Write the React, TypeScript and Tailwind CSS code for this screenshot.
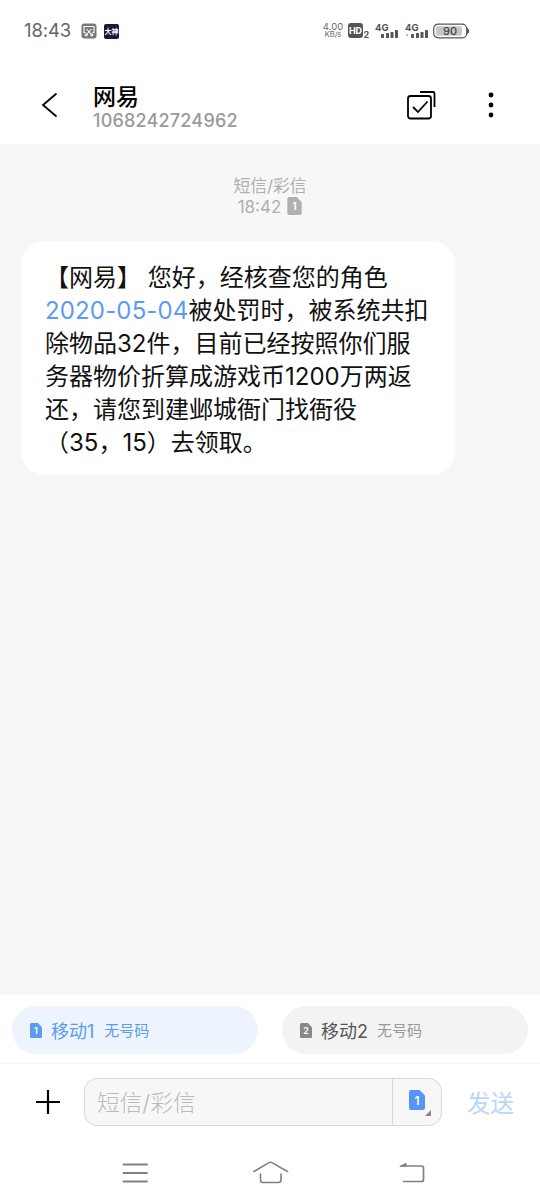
interface SimIconProps {
  slot: string;
  className: string;
}

// SIM card with a cut corner and the slot number
function SimIcon({ slot, className }: SimIconProps) {
  return (
    <svg viewBox="0 0 16 20" className={className}>
      <path d="M2 0H10.5L16 5.5V18a2 2 0 0 1-2 2H2a2 2 0 0 1-2-2V2a2 2 0 0 1 2-2Z" fill="currentColor" />
      <text x="8" y="14.5" textAnchor="middle" fontSize="12" fontWeight="600" fill="#fff">
        {slot}
      </text>
    </svg>
  );
}

function Signal({ first }: { first: string }) {
  return (
    <svg viewBox="0 0 25 18" className="h-[18px] w-[25px]">
      <text x="0" y="9" fontSize="9.5" fontWeight="700" fill="#555">
        4G
      </text>
      <rect x="1" y="12" width="2" height="2" fill={first} />
      <rect x="6" y="12" width="3" height="4" rx="0.5" fill="#555" />
      <rect x="11" y="11" width="3" height="5" rx="0.5" fill="#555" />
      <rect x="15.5" y="10" width="3" height="6" rx="0.5" fill="#555" />
      <rect x="20" y="8" width="3" height="8" rx="0.5" fill="#555" />
    </svg>
  );
}

function StatusBar() {
  return (
    <div className="flex h-[62px] items-center pl-6 text-[#666]">
      <span className="w-[57px] text-[18.5px] tracking-[-0.1px]">18:43</span>
      <svg viewBox="0 0 16 16" className="h-4 w-4">
        <rect x="0.5" y="0.5" width="15" height="15" rx="3" fill="#777" />
        <g fill="none" stroke="#fff" strokeWidth="1.1">
          <path d="M4.5 9.5H3V3.5H13V9.5H11.5M5.5 6L10 11M10.5 6L6 11" />
          <circle cx="5.2" cy="11.8" r="1.1" />
          <circle cx="10.8" cy="11.8" r="1.1" />
        </g>
      </svg>
      <span className="ml-[7px] flex h-[15px] w-[15px] items-center justify-center overflow-hidden rounded-xs bg-[#171a38] text-[7px] leading-none font-bold whitespace-nowrap text-white">
        大神
      </span>
      <div className="ml-[203px] w-[22px] text-center leading-[8px]">
        <div className="text-[9.5px]">4.00</div>
        <div className="text-[7.5px]">KB/s</div>
      </div>
      <svg viewBox="0 0 22 16" className="ml-[4px] h-4 w-[22px]">
        <rect x="0" y="0" width="15" height="15" rx="3" fill="#555" />
        <text x="7.5" y="11" textAnchor="middle" fontSize="9" fontWeight="700" fill="#fff">
          HD
        </text>
        <text x="15.5" y="15" fontSize="9" fontWeight="700" fill="#555">
          2
        </text>
      </svg>
      <div className="ml-[5px] flex gap-[5px]">
        <Signal first="#fff" />
        <Signal first="#bbb" />
      </div>
      <svg viewBox="0 0 37 16" className="ml-[3px] h-4 w-[37px]">
        <rect x="0.7" y="1.2" width="33" height="13.6" rx="4.5" fill="#fff" stroke="#555" strokeWidth="1.2" />
        <rect x="3" y="3.3" width="26" height="9.4" rx="2" fill="#c6c6c6" />
        <path d="M34.5 5.5c1.5.8 1.5 4.2 0 5Z" fill="#555" stroke="#555" />
        <text x="17" y="12" textAnchor="middle" fontSize="11" fontWeight="500" fill="#444">
          90
        </text>
      </svg>
    </div>
  );
}

function Header() {
  return (
    <header className="flex h-[82px] items-center pt-1">
      <svg viewBox="0 0 18 28" className="ml-[41px] h-7 w-[18px]" fill="none" stroke="#000" strokeWidth="1.8">
        <path d="M15.5 2.5L2 14L15.5 25.5" />
      </svg>
      <div className="ml-[34px] w-[312px] pt-[5px]">
        <h1 className="text-[23px] leading-[26px] font-medium text-black">网易</h1>
        <p className="text-[18px] leading-[22px] font-medium tracking-[0.2px] text-[#9a9a9a]">1068242724962</p>
      </div>
      <svg viewBox="0 0 32 32" className="ml-0.5 h-8 w-8" fill="none" stroke="#000" strokeWidth="1.8">
        <rect x="1" y="7" width="23" height="22.5" rx="2.5" />
        <path d="M6 18L11 23L20.5 12.5M13 3H26a1.5 1.5 0 0 1 1.5 1.5V18" />
      </svg>
      <svg viewBox="0 0 6 28" className="ml-[49px] h-7 w-1.5" fill="#000">
        <circle cx="3" cy="4" r="2.4" />
        <circle cx="3" cy="14" r="2.4" />
        <circle cx="3" cy="24" r="2.4" />
      </svg>
    </header>
  );
}

function Message() {
  return (
    <div className="ml-[21px] h-[234px] w-[434px] rounded-[24px] bg-white pt-5 pl-6 text-[24px] leading-[33px] whitespace-nowrap text-[#111]">
      <p>【网易】 您好，经核查您的角色</p>
      <p>
        <span className="tracking-[0.15px] text-[#5c9bf5]">2020-05-04</span>被处罚时，被系统共扣
      </p>
      <p>除物品32件，目前已经按照你们服</p>
      <p>务器物价折算成游戏币1200万两返</p>
      <p>还，请您到建邺城衙门找衙役</p>
      <p>（35，15）去领取。</p>
    </div>
  );
}

function SimSelector() {
  return (
    <div className="flex h-[69px] gap-6 border-b border-[#f5f5f5] px-3 pt-[11px]">
      <div className="flex h-12 flex-1 items-center rounded-full bg-[#edf4fe] pl-[18px] text-[#5c9bf0]">
        <SimIcon slot="1" className="h-[15px] w-3" />
        <span className="ml-[9px] pt-0.5 text-[18px]">移动1</span>
        <span className="ml-[10px] pt-0.5 text-[15px]">无号码</span>
      </div>
      <div className="flex h-12 flex-1 items-center rounded-full bg-[#f3f3f3] pl-[18px] text-[#888]">
        <SimIcon slot="2" className="h-[15px] w-3" />
        <span className="ml-[9px] pt-0.5 text-[18px] text-[#555]">移动2</span>
        <span className="ml-[9px] pt-0.5 text-[15px] text-[#999]">无号码</span>
      </div>
    </div>
  );
}

function Composer() {
  return (
    <div className="flex h-[76px] items-center">
      <svg viewBox="0 0 26 26" className="ml-[35px] h-[26px] w-[26px]" stroke="#000" strokeWidth="2.2">
        <path d="M1 13H25M13 1V25" />
      </svg>
      <div className="ml-[23px] flex h-12 w-[358px] rounded-[13px] border border-[#d8d8d8] bg-[#f7f7f7]">
        <div className="flex w-[307px] items-center pt-[3px] pl-3 text-[22.7px] font-light text-[#bbb]">短信/彩信</div>
        <div className="relative flex-1 border-l border-[#d8d8d8] pt-[11px] pl-4 text-[#5596f8]">
          <SimIcon slot="1" className="h-5 w-4" />
          <svg viewBox="0 0 6 6" className="absolute top-[31px] left-8 h-1.5 w-1.5">
            <path d="M6 0V6H0Z" fill="#888" />
          </svg>
        </div>
      </div>
      <span className="ml-[25px] pt-[3px] text-[23.5px] text-[#b9d6fb]">发送</span>
    </div>
  );
}

function NavBar() {
  return (
    <nav className="flex h-[64px] items-center pt-px pl-[122px] text-[#808080]">
      <svg viewBox="0 0 26 22" className="h-[22px] w-[26px]" stroke="currentColor" strokeWidth="1.8" strokeLinecap="round">
        <path d="M1.5 2.5H25M1.5 11H25M1.5 19.5H25" />
      </svg>
      <svg
        viewBox="0 0 36 24"
        className="ml-[105px] h-6 w-9"
        fill="none"
        stroke="currentColor"
        strokeWidth="1.6"
        strokeLinecap="round"
        strokeLinejoin="round"
      >
        <path d="M1 10.5L16 1.6Q17.5 0.8 19 1.6L34.5 10.5M7.5 13V19Q7.5 21.5 10 21.5H25.5Q28 21.5 28 19V13" />
      </svg>
      <svg
        viewBox="0 0 28 22"
        className="ml-[110px] h-[22px] w-7"
        fill="none"
        stroke="currentColor"
        strokeWidth="1.7"
        strokeLinecap="round"
      >
        <path d="M2 4H22.5Q24.5 4 24.5 6V17.5Q24.5 19.5 22.5 19.5H4.5" />
        <path d="M0 4.6L7.5 0.5V4.6Z" fill="currentColor" stroke="none" />
      </svg>
    </nav>
  );
}

export default function App() {
  return (
    <div className="flex h-[1204px] w-[540px] flex-col overflow-hidden bg-white font-['Inter','Noto_Sans_CJK_SC',sans-serif]">
      <StatusBar />
      <Header />
      <main className="h-[851px] bg-[#f7f7f7]">
        <div className="flex h-[97px] flex-col items-center pt-[31px] text-[#b0b0b0]">
          <div className="text-[16.8px] leading-[22px]">短信/彩信</div>
          <div className="flex items-center text-[17px] leading-[21px]">
            18:42
            <SimIcon slot="1" className="-mt-[3px] ml-1.5 h-[18px] w-[15px]" />
          </div>
        </div>
        <Message />
      </main>
      <SimSelector />
      <Composer />
      <NavBar />
    </div>
  );
}
